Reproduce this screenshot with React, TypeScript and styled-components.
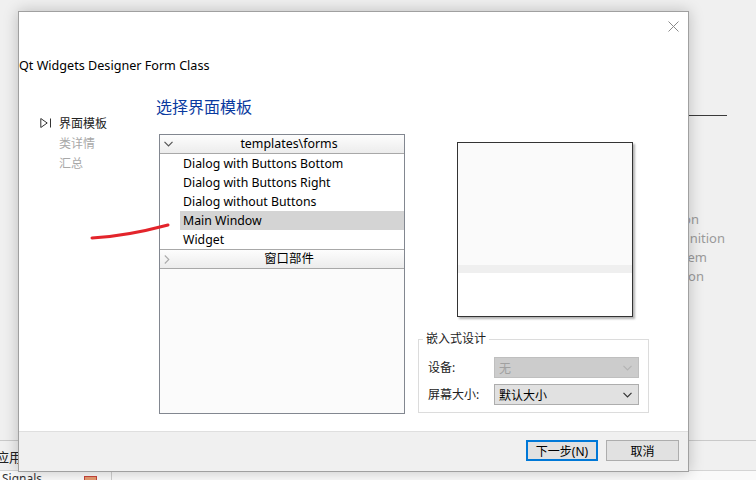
import React from "react";
import styled, { createGlobalStyle } from "styled-components";

const FONT = `"Noto Sans", "Noto Sans CJK SC", sans-serif`;

const GlobalStyle = createGlobalStyle`
  html, body {
    margin: 0;
    padding: 0;
    background: #f0f0f0;
  }
  * {
    box-sizing: border-box;
  }
`;

const Desktop = styled.div`
  position: relative;
  width: 756px;
  height: 480px;
  overflow: hidden;
  display: grid;
  grid-template-rows: 1fr 30px 10px;
  background: #f0f0f0;
  font-family: ${FONT};
  color: #000;
`;

/* ---------- the main window behind the dialog ---------- */

const BackArea = styled.div`
  display: flex;
  justify-content: flex-end;
`;

const RightPanel = styled.div`
  width: 156px;
  padding-top: 115px;
`;

const Rule = styled.div`
  width: 127px;
  height: 1px;
  background: #3a3a3a;
`;

const BgList = styled.div`
  margin-top: 94px;
`;

const BgLine = styled.div<{ $end: number }>`
  width: ${(p) => p.$end - 600}px;
  text-align: right;
  white-space: nowrap;
  font-size: 13px;
  line-height: 19px;
  color: #9a9a9a;
`;

const BottomPanel = styled.div`
  border-top: 1px solid #c9c9c9;
  font-size: 13px;
  line-height: 29px;
  padding-top: 2px;
  color: #222;
  white-space: nowrap;
`;

const CutText = styled.span`
  margin-left: -4px;
`;

const StatusStrip = styled.div`
  display: flex;
  background: #fafafa;
  border-top: 1px solid #d4d4d4;
`;

const StatusText = styled.div`
  width: 84px;
  font-size: 12px;
  line-height: 16px;
  padding-left: 2px;
  color: #333;
`;

const StatusSwatch = styled.div`
  width: 13px;
  height: 12px;
  margin-top: 5px;
  background: #e59a70;
  border: 1px solid #c8443a;
`;

const StatusDivider = styled.div`
  margin-left: 14px;
  margin-top: 1px;
  border-left: 1px solid #cfcfcf;
`;

/* ---------- dialog ---------- */

const Dialog = styled.div`
  position: absolute;
  left: 18px;
  top: 11px;
  width: 671px;
  height: 461px;
  background: #fff;
  border: 1px solid #a0a0a0;
  box-shadow: 0 0 14px rgba(0, 0, 0, 0.22);
  display: flex;
  flex-direction: column;
  z-index: 2;
`;

const CloseRow = styled.div`
  height: 28px;
  display: flex;
  justify-content: flex-end;
  align-items: center;
  padding-right: 9px;
`;

const Title = styled.div`
  margin-top: 15px;
  height: 20px;
  font-size: 12.6px;
  line-height: 21px;
`;

const Body = styled.div`
  flex: 1;
  display: flex;
  margin-top: 22px;
`;

const Nav = styled.div`
  width: 137px;
  padding-top: 16px;
  padding-left: 21px;
`;

const NavItem = styled.div<{ $active?: boolean }>`
  display: flex;
  align-items: center;
  height: 20px;
  font-size: 12px;
  color: ${(p) => (p.$active ? "#222" : "#a8a8a8")};
`;

const NavMark = styled.div`
  width: 19px;
  display: flex;
  align-items: center;
`;

const Main = styled.div`
  display: flex;
  flex-direction: column;
`;

const Heading = styled.div`
  font-size: 16px;
  line-height: 20px;
  color: #0a3aa0;
`;

const Content = styled.div`
  display: flex;
  margin-top: 17px;
  margin-left: 3px;
`;

const Tree = styled.div`
  width: 246px;
  height: 280px;
  border: 1px solid #828790;
  background: #fbfbfb;
  display: flex;
  flex-direction: column;
`;

const TreeHeader = styled.div<{ $top?: boolean }>`
  display: flex;
  align-items: center;
  height: ${(p) => (p.$top ? 20 : 19)}px;
  padding-left: 4px;
  background: linear-gradient(#fdfdfd, #ececec);
  border-top: ${(p) => (p.$top ? "1px solid #a8a8a8" : "none")};
  border-bottom: 1px solid #a8a8a8;
  font-size: 12.4px;
`;

const HeaderMark = styled.div`
  width: 10px;
  display: flex;
  align-items: center;
`;

const HeaderLabel = styled.div`
  flex: 1;
  text-align: center;
  line-height: 18px;
`;

const TreeItems = styled.div`
  background: #fff;
`;

const TreeItem = styled.div<{ $selected?: boolean }>`
  height: 19px;
  margin-left: 20px;
  padding-left: 3px;
  font-size: 12.3px;
  line-height: 19px;
  background: ${(p) => (p.$selected ? "#d4d4d4" : "transparent")};
`;

const RightCol = styled.div`
  margin-left: 13px;
  width: 231px;
  display: flex;
  flex-direction: column;
`;

const Preview = styled.div`
  margin-left: 39px;
  margin-top: 8px;
  width: 176px;
  height: 175px;
  border: 1px solid #333;
  box-shadow: 2px 2px 2px rgba(0, 0, 0, 0.3);
  display: flex;
  flex-direction: column;
`;

const PreviewPart = styled.div<{ $h?: number; $bg: string }>`
  flex: ${(p) => (p.$h ? `0 0 ${p.$h}px` : "1")};
  background: ${(p) => p.$bg};
`;

const Group = styled.fieldset`
  margin: 14px 0 0 0;
  padding: 0;
  min-width: 0;
  width: 231px;
  border: 1px solid #dcdcdc;
`;

const Legend = styled.legend`
  margin-left: 4px;
  padding: 0 3px;
  font-size: 12px;
  line-height: 16px;
  color: #222;
`;

const GroupGrid = styled.div`
  display: grid;
  grid-template-columns: 66px 145px;
  row-gap: 6px;
  margin-top: 10px;
  padding: 0 0 7px 9px;
`;

const FieldLabel = styled.div`
  font-size: 12px;
  line-height: 21px;
  color: #222;
`;

const Combo = styled.div<{ $disabled?: boolean }>`
  height: 21px;
  display: flex;
  align-items: center;
  justify-content: space-between;
  padding: 0 6px 0 4px;
  font-size: 12px;
  background: ${(p) => (p.$disabled ? "#cccccc" : "#e1e1e1")};
  border: 1px solid ${(p) => (p.$disabled ? "#bfbfbf" : "#adadad")};
  color: ${(p) => (p.$disabled ? "#a0a0a0" : "#000")};
`;

const Footer = styled.div`
  height: 40px;
  border-top: 1px solid #dfdfdf;
  background: #f0f0f0;
  display: flex;
  justify-content: flex-end;
  align-items: flex-start;
  gap: 8px;
  padding: 8px 9px 0 0;
`;

const Button = styled.button<{ $primary?: boolean }>`
  width: ${(p) => (p.$primary ? 72 : 73)}px;
  height: 21px;
  padding: 0;
  font-family: ${FONT};
  font-size: 12px;
  color: #000;
  background: #e1e1e1;
  border: ${(p) => (p.$primary ? "2px solid #0078d7" : "1px solid #adadad")};
`;

const Scribble = styled.svg`
  position: absolute;
  left: 0;
  top: 0;
  z-index: 5;
  pointer-events: none;
`;

const Chevron = ({ color, dir = "down" }: { color: string; dir?: "down" | "right" }) =>
  dir === "down" ? (
    <svg width="9" height="6" viewBox="0 0 9 6">
      <path d="M0.5 0.8 L4.5 4.8 L8.5 0.8" fill="none" stroke={color} strokeWidth="1.2" />
    </svg>
  ) : (
    <svg width="6" height="9" viewBox="0 0 6 9">
      <path d="M0.8 0.5 L4.8 4.5 L0.8 8.5" fill="none" stroke={color} strokeWidth="1.1" />
    </svg>
  );

const templates = [
  "Dialog with Buttons Bottom",
  "Dialog with Buttons Right",
  "Dialog without Buttons",
  "Main Window",
  "Widget",
];

const navSteps = ["界面模板", "类详情", "汇总"];

export default function App() {
  return (
    <Desktop>
      <GlobalStyle />
      <BackArea>
        <RightPanel>
          <Rule />
          <BgList>
            <BgLine $end={699}>Application</BgLine>
            <BgLine $end={725}>Definition</BgLine>
            <BgLine $end={707}>System</BgLine>
            <BgLine $end={704}>Application</BgLine>
          </BgList>
        </RightPanel>
      </BackArea>
      <BottomPanel>
        <CutText>应用</CutText>
      </BottomPanel>
      <StatusStrip>
        <StatusText>Signals</StatusText>
        <StatusSwatch />
        <StatusDivider />
      </StatusStrip>

      <Dialog>
        <CloseRow>
          <svg width="11" height="11" viewBox="0 0 11 11">
            <path d="M0.5 0.5 L10.5 10.5 M10.5 0.5 L0.5 10.5" stroke="#8a8a8a" strokeWidth="1" />
          </svg>
        </CloseRow>
        <Title>Qt Widgets Designer Form Class</Title>
        <Body>
          <Nav>
            {navSteps.map((s, i) => (
              <NavItem key={s} $active={i === 0}>
                <NavMark>
                  {i === 0 && (
                    <svg width="12" height="10" viewBox="0 0 12 10">
                      <path d="M0.8 0.5 L7.2 5 L0.8 9.5 Z" fill="none" stroke="#333" strokeWidth="1" />
                      <path d="M10.5 0.5 V9.5" stroke="#333" strokeWidth="1" />
                    </svg>
                  )}
                </NavMark>
                {s}
              </NavItem>
            ))}
          </Nav>
          <Main>
            <Heading>选择界面模板</Heading>
            <Content>
              <Tree>
                <TreeHeader>
                  <HeaderMark>
                    <Chevron color="#555" />
                  </HeaderMark>
                  <HeaderLabel>templates\forms</HeaderLabel>
                </TreeHeader>
                <TreeItems>
                  {templates.map((t) => (
                    <TreeItem key={t} $selected={t === "Main Window"}>
                      {t}
                    </TreeItem>
                  ))}
                </TreeItems>
                <TreeHeader $top>
                  <HeaderMark>
                    <Chevron color="#aaa" dir="right" />
                  </HeaderMark>
                  <HeaderLabel>窗口部件</HeaderLabel>
                </TreeHeader>
              </Tree>
              <RightCol>
                <Preview>
                  <PreviewPart $h={122} $bg="#fafafa" />
                  <PreviewPart $h={8} $bg="#efefef" />
                  <PreviewPart $bg="#ffffff" />
                </Preview>
                <Group>
                  <Legend>嵌入式设计</Legend>
                  <GroupGrid>
                    <FieldLabel>设备:</FieldLabel>
                    <Combo $disabled>
                      <span>无</span>
                      <Chevron color="#b4b4b4" />
                    </Combo>
                    <FieldLabel>屏幕大小:</FieldLabel>
                    <Combo>
                      <span>默认大小</span>
                      <Chevron color="#333" />
                    </Combo>
                  </GroupGrid>
                </Group>
              </RightCol>
            </Content>
          </Main>
        </Body>
        <Footer>
          <Button $primary>下一步(N)</Button>
          <Button>取消</Button>
        </Footer>
      </Dialog>

      <Scribble width="756" height="480" viewBox="0 0 756 480">
        <path
          d="M92 238 C112 237 138 233 168 225"
          fill="none"
          stroke="#e3242b"
          strokeWidth="3"
          strokeLinecap="round"
        />
      </Scribble>
    </Desktop>
  );
}
